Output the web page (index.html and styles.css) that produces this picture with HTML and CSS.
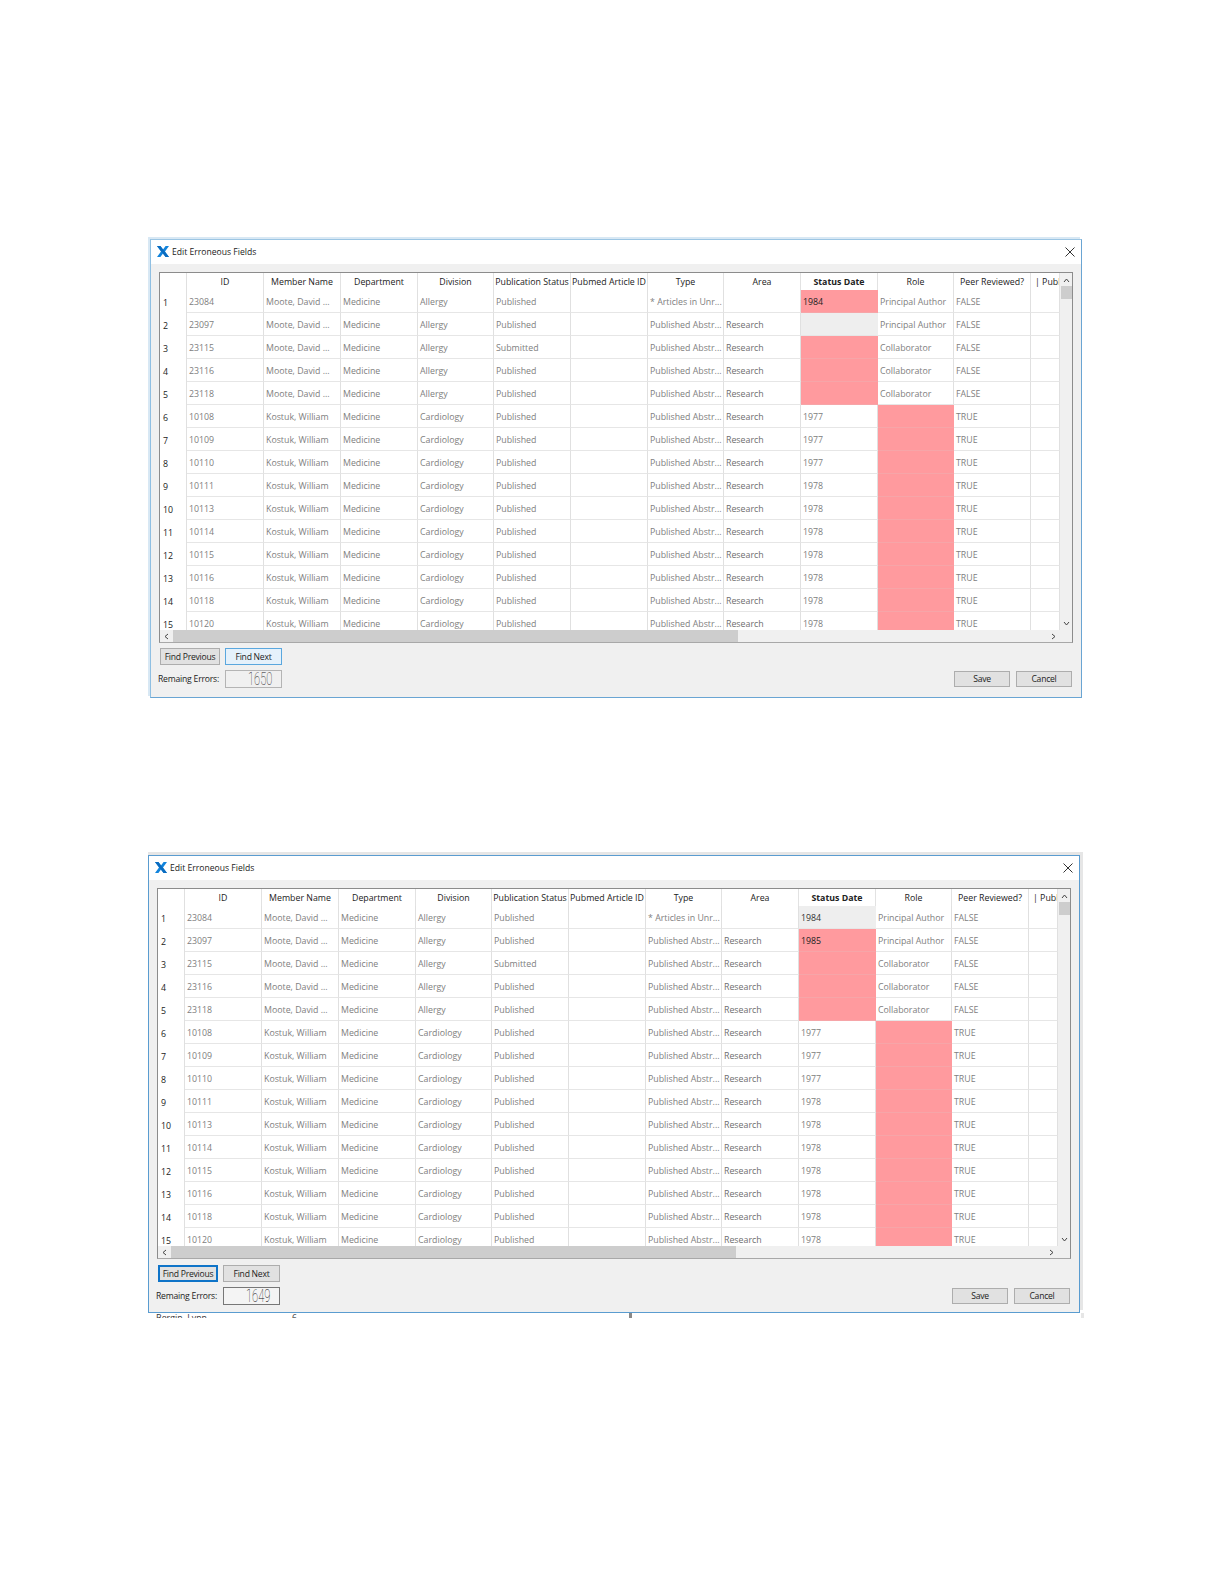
FILE: index.html
```html
<!DOCTYPE html>
<html lang="en">
<head>
<meta charset="utf-8">
<title>Edit Erroneous Fields</title>
<link rel="stylesheet" href="styles.css">
</head>
<body>
<main class="page">
<section class="shot shot-a">
<div class="dialog">
<header class="titlebar">
<svg class="logo" viewBox="0 0 12 11"><path d="M0 0h3.4L6 3.6 8.6 0H12L8 5.5 12 11H8.6L6 7.4 3.4 11H0L4 5.5Z" fill="#1284dc"/><path d="M0 0h3.4L12 11H8.6Z" fill="#0b6cc0"/></svg>
<h1 class="title">Edit Erroneous Fields</h1>
<svg class="close" viewBox="0 0 10 10"><path d="M.5.5l9 9M9.5.5l-9 9" stroke="#333" fill="none"/></svg>
</header>
<div class="pane">
<div class="sheet">
<div class="clip">
<table class="grid">
<colgroup><col class="w-g"><col class="w77"><col class="w77"><col class="w77"><col class="w76"><col class="w77"><col class="w77"><col class="w76"><col class="w77"><col class="w77"><col class="w76"><col class="w77"><col class="w-e"></colgroup>
<thead><tr><th class="gut"></th><th><span class="h">ID</span></th><th><span class="h">Member Name</span></th><th><span class="h">Department</span></th><th><span class="h">Division</span></th><th><span class="h">Publication Status</span></th><th><span class="h">Pubmed Article ID</span></th><th><span class="h">Type</span></th><th><span class="h">Area</span></th><th><span class="h strong">Status Date</span></th><th><span class="h">Role</span></th><th><span class="h">Peer Reviewed?</span></th><th><span class="h lead">| Publ</span></th></tr></thead>
<tbody>
<tr><th class="gut">1</th><td>23084</td><td>Moote, David ...</td><td>Medicine</td><td>Allergy</td><td>Published</td><td></td><td>* Articles in Unr...</td><td></td><td class="err">1984</td><td>Principal Author</td><td>FALSE</td><td></td></tr>
<tr><th class="gut">2</th><td>23097</td><td>Moote, David ...</td><td>Medicine</td><td>Allergy</td><td>Published</td><td></td><td>Published Abstr...</td><td>Research</td><td class="sel"></td><td>Principal Author</td><td>FALSE</td><td></td></tr>
<tr><th class="gut">3</th><td>23115</td><td>Moote, David ...</td><td>Medicine</td><td>Allergy</td><td>Submitted</td><td></td><td>Published Abstr...</td><td>Research</td><td class="err"></td><td>Collaborator</td><td>FALSE</td><td></td></tr>
<tr><th class="gut">4</th><td>23116</td><td>Moote, David ...</td><td>Medicine</td><td>Allergy</td><td>Published</td><td></td><td>Published Abstr...</td><td>Research</td><td class="err"></td><td>Collaborator</td><td>FALSE</td><td></td></tr>
<tr><th class="gut">5</th><td>23118</td><td>Moote, David ...</td><td>Medicine</td><td>Allergy</td><td>Published</td><td></td><td>Published Abstr...</td><td>Research</td><td class="err"></td><td>Collaborator</td><td>FALSE</td><td></td></tr>
<tr><th class="gut">6</th><td>10108</td><td>Kostuk, William</td><td>Medicine</td><td>Cardiology</td><td>Published</td><td></td><td>Published Abstr...</td><td>Research</td><td>1977</td><td class="err"></td><td>TRUE</td><td></td></tr>
<tr><th class="gut">7</th><td>10109</td><td>Kostuk, William</td><td>Medicine</td><td>Cardiology</td><td>Published</td><td></td><td>Published Abstr...</td><td>Research</td><td>1977</td><td class="err"></td><td>TRUE</td><td></td></tr>
<tr><th class="gut">8</th><td>10110</td><td>Kostuk, William</td><td>Medicine</td><td>Cardiology</td><td>Published</td><td></td><td>Published Abstr...</td><td>Research</td><td>1977</td><td class="err"></td><td>TRUE</td><td></td></tr>
<tr><th class="gut">9</th><td>10111</td><td>Kostuk, William</td><td>Medicine</td><td>Cardiology</td><td>Published</td><td></td><td>Published Abstr...</td><td>Research</td><td>1978</td><td class="err"></td><td>TRUE</td><td></td></tr>
<tr><th class="gut">10</th><td>10113</td><td>Kostuk, William</td><td>Medicine</td><td>Cardiology</td><td>Published</td><td></td><td>Published Abstr...</td><td>Research</td><td>1978</td><td class="err"></td><td>TRUE</td><td></td></tr>
<tr><th class="gut">11</th><td>10114</td><td>Kostuk, William</td><td>Medicine</td><td>Cardiology</td><td>Published</td><td></td><td>Published Abstr...</td><td>Research</td><td>1978</td><td class="err"></td><td>TRUE</td><td></td></tr>
<tr><th class="gut">12</th><td>10115</td><td>Kostuk, William</td><td>Medicine</td><td>Cardiology</td><td>Published</td><td></td><td>Published Abstr...</td><td>Research</td><td>1978</td><td class="err"></td><td>TRUE</td><td></td></tr>
<tr><th class="gut">13</th><td>10116</td><td>Kostuk, William</td><td>Medicine</td><td>Cardiology</td><td>Published</td><td></td><td>Published Abstr...</td><td>Research</td><td>1978</td><td class="err"></td><td>TRUE</td><td></td></tr>
<tr><th class="gut">14</th><td>10118</td><td>Kostuk, William</td><td>Medicine</td><td>Cardiology</td><td>Published</td><td></td><td>Published Abstr...</td><td>Research</td><td>1978</td><td class="err"></td><td>TRUE</td><td></td></tr>
<tr><th class="gut">15</th><td>10120</td><td>Kostuk, William</td><td>Medicine</td><td>Cardiology</td><td>Published</td><td></td><td>Published Abstr...</td><td>Research</td><td>1978</td><td class="err"></td><td>TRUE</td><td></td></tr>
</tbody>
</table>
</div>
<div class="vbar">
<svg class="arrow" viewBox="0 0 7 5"><path d="M1 4l2.5-3L6 4" stroke="#444" fill="none"/></svg>
<div class="vthumb"></div>
<svg class="arrow arrow-end" viewBox="0 0 7 5"><path d="M1 1l2.5 3L6 1" stroke="#444" fill="none"/></svg>
</div>
</div>
<div class="hbar">
<svg class="arrow-h" viewBox="0 0 5 7"><path d="M4 1L1 3.5 4 6" stroke="#444" fill="none"/></svg>
<div class="hthumb"></div>
<svg class="arrow-h" viewBox="0 0 5 7"><path d="M1 1l3 2.5L1 6" stroke="#444" fill="none"/></svg>
</div>
</div>
<footer class="footer">
<div class="tools">
<div class="btn-row">
<button class="btn btn-find" type="button">Find Previous</button>
<button class="btn btn-next btn-hover" type="button">Find Next</button>
</div>
<div class="count-row">
<span class="count-label">Remaing Errors:</span>
<output class="lcd"><span class="digits">1650</span></output>
</div>
</div>
<div class="actions">
<button class="btn btn-action" type="button">Save</button>
<button class="btn btn-action" type="button">Cancel</button>
</div>
</footer>
</div>
</section>

<section class="shot shot-b">
<div class="dialog">
<header class="titlebar">
<svg class="logo" viewBox="0 0 12 11"><path d="M0 0h3.4L6 3.6 8.6 0H12L8 5.5 12 11H8.6L6 7.4 3.4 11H0L4 5.5Z" fill="#1284dc"/><path d="M0 0h3.4L12 11H8.6Z" fill="#0b6cc0"/></svg>
<h1 class="title">Edit Erroneous Fields</h1>
<svg class="close" viewBox="0 0 10 10"><path d="M.5.5l9 9M9.5.5l-9 9" stroke="#333" fill="none"/></svg>
</header>
<div class="pane">
<div class="sheet">
<div class="clip">
<table class="grid">
<colgroup><col class="w-g"><col class="w77"><col class="w77"><col class="w77"><col class="w76"><col class="w77"><col class="w77"><col class="w76"><col class="w77"><col class="w77"><col class="w76"><col class="w77"><col class="w-e"></colgroup>
<thead><tr><th class="gut"></th><th><span class="h">ID</span></th><th><span class="h">Member Name</span></th><th><span class="h">Department</span></th><th><span class="h">Division</span></th><th><span class="h">Publication Status</span></th><th><span class="h">Pubmed Article ID</span></th><th><span class="h">Type</span></th><th><span class="h">Area</span></th><th><span class="h strong">Status Date</span></th><th><span class="h">Role</span></th><th><span class="h">Peer Reviewed?</span></th><th><span class="h lead">| Publ</span></th></tr></thead>
<tbody>
<tr><th class="gut">1</th><td>23084</td><td>Moote, David ...</td><td>Medicine</td><td>Allergy</td><td>Published</td><td></td><td>* Articles in Unr...</td><td></td><td class="sel">1984</td><td>Principal Author</td><td>FALSE</td><td></td></tr>
<tr><th class="gut">2</th><td>23097</td><td>Moote, David ...</td><td>Medicine</td><td>Allergy</td><td>Published</td><td></td><td>Published Abstr...</td><td>Research</td><td class="err">1985</td><td>Principal Author</td><td>FALSE</td><td></td></tr>
<tr><th class="gut">3</th><td>23115</td><td>Moote, David ...</td><td>Medicine</td><td>Allergy</td><td>Submitted</td><td></td><td>Published Abstr...</td><td>Research</td><td class="err"></td><td>Collaborator</td><td>FALSE</td><td></td></tr>
<tr><th class="gut">4</th><td>23116</td><td>Moote, David ...</td><td>Medicine</td><td>Allergy</td><td>Published</td><td></td><td>Published Abstr...</td><td>Research</td><td class="err"></td><td>Collaborator</td><td>FALSE</td><td></td></tr>
<tr><th class="gut">5</th><td>23118</td><td>Moote, David ...</td><td>Medicine</td><td>Allergy</td><td>Published</td><td></td><td>Published Abstr...</td><td>Research</td><td class="err"></td><td>Collaborator</td><td>FALSE</td><td></td></tr>
<tr><th class="gut">6</th><td>10108</td><td>Kostuk, William</td><td>Medicine</td><td>Cardiology</td><td>Published</td><td></td><td>Published Abstr...</td><td>Research</td><td>1977</td><td class="err"></td><td>TRUE</td><td></td></tr>
<tr><th class="gut">7</th><td>10109</td><td>Kostuk, William</td><td>Medicine</td><td>Cardiology</td><td>Published</td><td></td><td>Published Abstr...</td><td>Research</td><td>1977</td><td class="err"></td><td>TRUE</td><td></td></tr>
<tr><th class="gut">8</th><td>10110</td><td>Kostuk, William</td><td>Medicine</td><td>Cardiology</td><td>Published</td><td></td><td>Published Abstr...</td><td>Research</td><td>1977</td><td class="err"></td><td>TRUE</td><td></td></tr>
<tr><th class="gut">9</th><td>10111</td><td>Kostuk, William</td><td>Medicine</td><td>Cardiology</td><td>Published</td><td></td><td>Published Abstr...</td><td>Research</td><td>1978</td><td class="err"></td><td>TRUE</td><td></td></tr>
<tr><th class="gut">10</th><td>10113</td><td>Kostuk, William</td><td>Medicine</td><td>Cardiology</td><td>Published</td><td></td><td>Published Abstr...</td><td>Research</td><td>1978</td><td class="err"></td><td>TRUE</td><td></td></tr>
<tr><th class="gut">11</th><td>10114</td><td>Kostuk, William</td><td>Medicine</td><td>Cardiology</td><td>Published</td><td></td><td>Published Abstr...</td><td>Research</td><td>1978</td><td class="err"></td><td>TRUE</td><td></td></tr>
<tr><th class="gut">12</th><td>10115</td><td>Kostuk, William</td><td>Medicine</td><td>Cardiology</td><td>Published</td><td></td><td>Published Abstr...</td><td>Research</td><td>1978</td><td class="err"></td><td>TRUE</td><td></td></tr>
<tr><th class="gut">13</th><td>10116</td><td>Kostuk, William</td><td>Medicine</td><td>Cardiology</td><td>Published</td><td></td><td>Published Abstr...</td><td>Research</td><td>1978</td><td class="err"></td><td>TRUE</td><td></td></tr>
<tr><th class="gut">14</th><td>10118</td><td>Kostuk, William</td><td>Medicine</td><td>Cardiology</td><td>Published</td><td></td><td>Published Abstr...</td><td>Research</td><td>1978</td><td class="err"></td><td>TRUE</td><td></td></tr>
<tr><th class="gut">15</th><td>10120</td><td>Kostuk, William</td><td>Medicine</td><td>Cardiology</td><td>Published</td><td></td><td>Published Abstr...</td><td>Research</td><td>1978</td><td class="err"></td><td>TRUE</td><td></td></tr>
</tbody>
</table>
</div>
<div class="vbar">
<svg class="arrow" viewBox="0 0 7 5"><path d="M1 4l2.5-3L6 4" stroke="#444" fill="none"/></svg>
<div class="vthumb"></div>
<svg class="arrow arrow-end" viewBox="0 0 7 5"><path d="M1 1l2.5 3L6 1" stroke="#444" fill="none"/></svg>
</div>
</div>
<div class="hbar">
<svg class="arrow-h" viewBox="0 0 5 7"><path d="M4 1L1 3.5 4 6" stroke="#444" fill="none"/></svg>
<div class="hthumb"></div>
<svg class="arrow-h" viewBox="0 0 5 7"><path d="M1 1l3 2.5L1 6" stroke="#444" fill="none"/></svg>
</div>
</div>
<footer class="footer">
<div class="tools">
<div class="btn-row">
<button class="btn btn-find btn-focus" type="button">Find Previous</button>
<button class="btn btn-next" type="button">Find Next</button>
</div>
<div class="count-row">
<span class="count-label">Remaing Errors:</span>
<output class="lcd lcd-dark"><span class="digits">1649</span></output>
</div>
</div>
<div class="actions">
<button class="btn btn-action" type="button">Save</button>
<button class="btn btn-action" type="button">Cancel</button>
</div>
</footer>
</div>
<div class="behind">
<span class="behind-name">Bergin, Lynn</span>
<span class="behind-num">6</span>
<span class="behind-bar"></span>
</div>
</section>
</main>
</body>
</html>
```
FILE: styles.css
```css
* { box-sizing: border-box; }
html, body { margin: 0; padding: 0; background: #fff; }
body { font-family: "Open Sans", "Noto Sans", sans-serif; color: #222; }
.page { width: 1224px; height: 1584px; padding-top: 239px; overflow: hidden; }

.shot-a { margin-left: 150px; width: 932px; }
.shot-a .dialog { width: 932px; height: 459px; border: 1px solid #6aa5d3; border-top-color: #9cc6e4; border-left-color: #8fbfe2; box-shadow: -2px -2px 0 #d8e8f4; }
.shot-b { margin-left: 148px; margin-top: 157px; width: 936px; }
.shot-b .dialog { width: 932px; height: 458px; border: 1px solid #5a9cd0; box-shadow: 3px -3px 0 #e6e6e6, 0 -3px 0 #e6e6e6; }
.shot-b .footer { padding-top: 6px; }

.dialog { display: flex; flex-direction: column; background: #f0f0f0; }

.titlebar { display: flex; align-items: center; height: 24px; flex: none; background: #fff; padding: 0 5px 0 6px; gap: 3px; }
.logo { width: 12px; height: 11px; flex: none; margin-top: -2px; }
.title { margin: 0; flex: 1; font-size: 8.6px; font-weight: 400; color: #222; }
.close { width: 10px; height: 10px; flex: none; margin-right: 1px; }

.pane { margin: 8px 8px 0 8px; height: 371px; flex: none; border: 1px solid #8c8c8c; border-bottom-color: #a8a8a8; background: #f0f0f0; display: flex; flex-direction: column; }
.sheet { display: flex; height: 357px; flex: none; }
.clip { width: 900px; height: 357px; overflow: hidden; background: #fff; flex: none; }

.grid { border-collapse: separate; border-spacing: 0; table-layout: fixed; width: 900px; font-size: 8.8px; }
.w-g { width: 27px; }
.w76 { width: 76px; }
.w77 { width: 77px; }
.w-e { width: 29px; }

.grid thead th { height: 17px; padding: 0; font-weight: 400; color: #222; border-right: 1px solid #e2e2e2; background: #fff; overflow: hidden; }
.h { display: flex; justify-content: center; white-space: nowrap; }
.strong { font-weight: 700; }
.lead { justify-content: flex-start; padding-left: 4px; }
.grid td, .grid tbody th { height: 23px; padding: 2px 2px 0; white-space: nowrap; overflow: hidden; color: #808080; font-weight: 400; border-right: 1px solid #e0e0e0; border-bottom: 1px solid #e6e6e6; text-align: left; line-height: 20px; }
.grid tbody th.gut { color: #222; border-bottom: 0; border-right: 1px solid #e0e0e0; padding: 3px 0 0 3px; line-height: 20px; }
.grid thead th.gut { border-right: 1px solid #e0e0e0; }
.grid td:nth-child(9) { color: #6e6e6e; }
.grid td.err { background: #ff9a9e; color: #222; border-bottom-color: #f6a5a8; border-right-color: #ff9a9e; }
.grid td.sel { background: #eeeeee; color: #333; border-right-color: #eeeeee; }

.vbar { width: 12px; flex: none; display: flex; flex-direction: column; align-items: center; background: #f0f0f0; }
.arrow { width: 7px; height: 5px; margin-top: 5px; flex: none; }
.vthumb { width: 11px; height: 13px; margin-top: 3px; background: #cdcdcd; }
.arrow-end { margin-top: auto; margin-bottom: 4px; }
.hbar { height: 12px; flex: none; display: flex; align-items: center; background: #f0f0f0; }
.arrow-h { width: 5px; height: 7px; flex: none; margin-left: 4px; }
.hthumb { width: 565px; height: 12px; margin-left: 4px; background: #cdcdcd; }
.hthumb + .arrow-h { margin-left: 313px; }

.footer { display: flex; justify-content: space-between; align-items: flex-start; padding: 5px 9px 9px 9px; flex: 1; }
.tools { display: flex; flex-direction: column; gap: 5px; }
.btn-row { display: flex; gap: 5px; }
.btn { font: inherit; font-size: 8.6px; letter-spacing: -.25px; color: #222; padding: 0; background: #e1e1e1; border: 1px solid #adadad; height: 17px; line-height: 14px; white-space: nowrap; }
.btn-find { width: 60px; }
.btn-next { width: 57px; }
.btn-hover { background: #e5f1fb; border-color: #5aa7de; }
.btn-focus { border: 2px solid #0f74c8; }
.count-row { display: flex; align-items: center; }
.count-label { width: 67px; margin-left: -2px; font-size: 8.6px; letter-spacing: -.2px; color: #222; white-space: nowrap; }
.lcd { width: 57px; height: 18px; border: 1px solid #b4b4b4; background: #f0f0f0; font-family: Roboto, sans-serif; font-weight: 100; font-size: 18px; line-height: 16px; color: #222; text-align: right; padding-right: 9px; }
.digits { display: inline-block; line-height: 16px; transform: scaleX(.62); transform-origin: right center; }
.lcd-dark { border-color: #777; background: #f4f4f4; color: #111; }
.actions { display: flex; gap: 6px; align-self: flex-end; margin-bottom: 1px; }
.btn-action { width: 56px; height: 16px; }

.behind { display: flex; height: 5px; overflow: hidden; background: #fff; padding-left: 8px; font-size: 8.8px; line-height: 12px; color: #333; border-right: 3px solid #e6e6e6; }
.behind-name { width: 136px; margin-top: -1px; white-space: nowrap; }
.behind-num { width: 337px; margin-top: -1px; }
.behind-bar { width: 3px; background: #888; }
```
